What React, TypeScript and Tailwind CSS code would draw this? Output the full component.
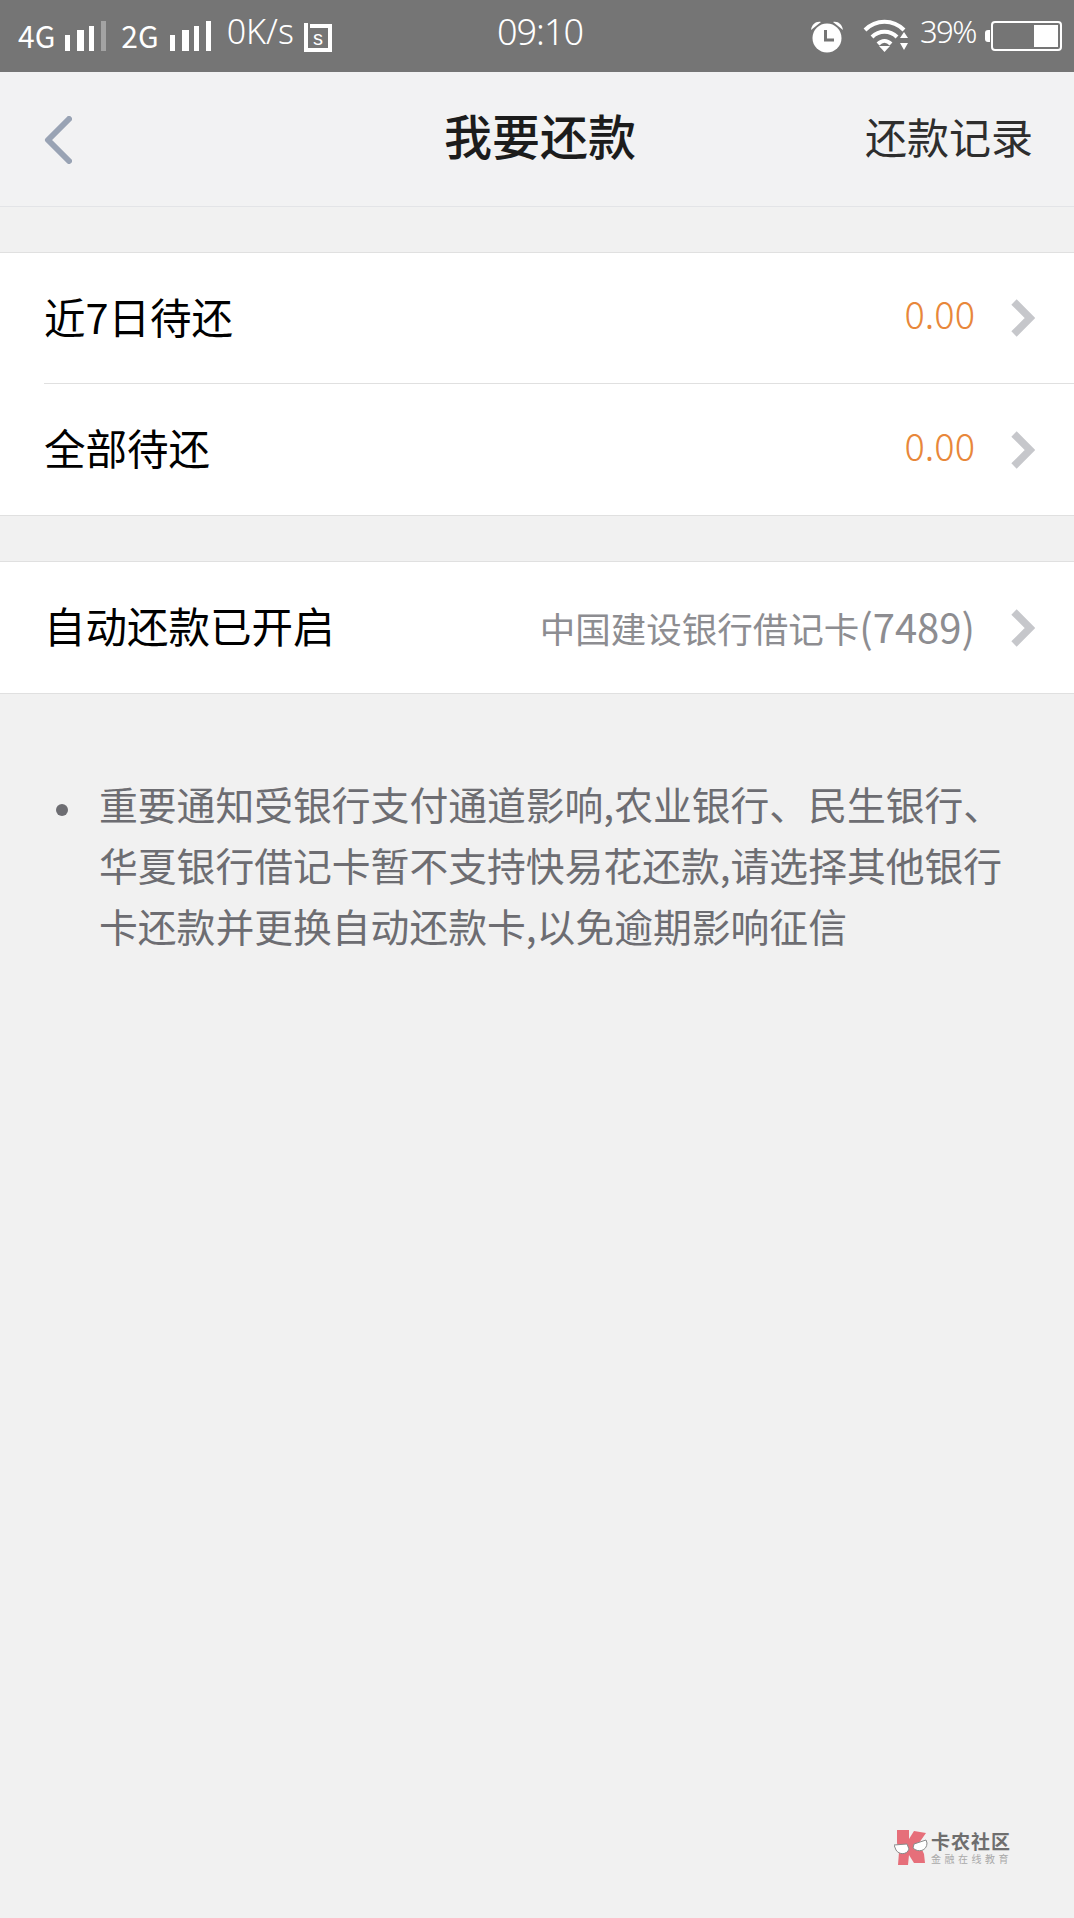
import type { ReactNode } from "react";

const cjk = { fontFamily: '"Noto Sans CJK SC", "Noto Sans", sans-serif' };
const thin = { fontFamily: '"Noto Sans", sans-serif' };

function Chevron() {
  return (
    <svg width="24" height="38" viewBox="0 0 24 38" className="shrink-0">
      <path d="M3 3 L19 19 L3 35" fill="none" stroke="#c6c7cb" strokeWidth="7.5" />
    </svg>
  );
}

function Signal({ dim }: { dim?: boolean }) {
  return (
    <svg width="41" height="30" viewBox="0 0 41 30" className="shrink-0">
      <rect x="0" y="14" width="5" height="16" fill="#fff" />
      <rect x="12" y="9" width="7" height="21" fill="#fff" />
      <rect x="24" y="5" width="5" height="25" fill="#fff" />
      <rect x="36" y="0" width="5" height="30" fill={dim ? "#a3a3a3" : "#fff"} />
    </svg>
  );
}

function Row({
  label,
  children,
  rowClass,
}: {
  label: string;
  children: ReactNode;
  rowClass: string;
}) {
  return (
    <div className={`flex items-center justify-between pl-[44px] pr-[39px] ${rowClass}`}>
      <span className="pb-[3px] text-[41.5px] leading-none text-black">{label}</span>
      <div className="flex items-center gap-[36px]">
        {children}
        <Chevron />
      </div>
    </div>
  );
}

function Amount() {
  return <span className="pb-[10px] text-[38px] font-light leading-none text-[#e8873a]">0.00</span>;
}

export default function App() {
  return (
    <div className="flex min-h-[1918px] w-[1074px] flex-col bg-[#f1f1f1]" style={cjk}>
      {/* status bar */}
      <div className="relative flex h-[72px] items-center justify-between bg-[#757575] pl-[18px] pr-[12px] text-white">
        <div className="flex items-center">
          <span className="pb-[3px] text-[30px] leading-none">4G</span>
          <span className="ml-[10px]"><Signal dim /></span>
          <span className="ml-[15px] pb-[3px] text-[30px] leading-none">2G</span>
          <span className="ml-[11px]"><Signal /></span>
          <span className="ml-[16px] pb-[10px] text-[34px] font-light leading-none" style={thin}>0K/s</span>
          <svg width="28" height="31" viewBox="0 0 28 31" className="ml-[10px]">
            <path d="M2 2 V29 H26 V5 H6" fill="none" stroke="#fff" strokeWidth="4" />
            <text x="14" y="24" textAnchor="middle" fontSize="20" fill="#fff" fontFamily="Liberation Sans">s</text>
          </svg>
        </div>
        <span
          className="absolute left-[497px] top-[10px] text-[36px] font-light leading-[44px] tracking-[-1px]"
          style={thin}
        >
          09:10
        </span>
        <div className="flex items-center">
          <svg width="34" height="33" viewBox="0 0 34 33">
            <circle cx="17" cy="18" r="14.5" fill="#fff" />
            <path d="M1 10 C2 4 6 1 11 2 Z M33 10 C32 4 28 1 23 2 Z" fill="#fff" />
            <path d="M15.5 10 V20 H24" fill="none" stroke="#757575" strokeWidth="3" />
          </svg>
          <svg width="46" height="34" viewBox="0 0 46 34" className="ml-[19px]">
            <path d="M2 11 C13 0 30 0 41 11" fill="none" stroke="#fff" strokeWidth="4" />
            <path d="M9 18 C16 11 27 11 34 18" fill="none" stroke="#fff" strokeWidth="4" />
            <path d="M15 25 C19 21 24 21 28 25" fill="none" stroke="#fff" strokeWidth="4" />
            <path d="M16 27 H27 L21.5 33 Z" fill="#fff" />
            <path d="M41 13 L45 19 H37 Z M37 24 H45 L41 31 Z" fill="#fff" />
          </svg>
          <span className="ml-[11px] pb-[10px] text-[31px] font-light leading-none tracking-[-1.5px]" style={thin}>
            39%
          </span>
          <div className="ml-[9px] h-[12px] w-[5px] rounded-l-[3px] bg-white" />
          <div className="ml-[1px] flex h-[30px] w-[71px] justify-end rounded-[4px] border-2 border-white p-[2px]">
            <div className="h-full w-[24px] bg-white" />
          </div>
        </div>
      </div>

      {/* nav bar */}
      <div className="relative flex h-[135px] items-center justify-between border-b border-[#e3e4e7] bg-[#f2f2f3] pl-[44px] pr-[41px]">
        <svg width="28" height="48" viewBox="0 0 28 48" className="mt-[2px]">
          <path d="M25 3 L4 24 L25 45" fill="none" stroke="#99a3b4" strokeWidth="6" strokeLinecap="round" strokeLinejoin="round" />
        </svg>
        <span className="absolute left-[444px] top-[34px] text-[48px] font-medium leading-[56px] text-[#1c1c1c]">我要还款</span>
        <span className="pb-[6px] text-[42px] leading-none text-[#2e2e2e]">还款记录</span>
      </div>

      {/* amounts */}
      <div className="mt-[45px] border-y border-[#e0e0e0] bg-white">
        <Row label="近7日待还" rowClass="h-[130px]">
          <Amount />
        </Row>
        <div className="ml-[44px] h-px bg-[#e0e0e0]" />
        <Row label="全部待还" rowClass="h-[131px]">
          <Amount />
        </Row>
      </div>

      {/* auto repay */}
      <div className="mt-[45px] border-y border-[#e0e0e0] bg-white">
        <Row label="自动还款已开启" rowClass="h-[131px]">
          <span className="pb-[3px] text-[35.5px] leading-none text-[#8d8d91]">
            中国建设银行借记卡<span className="text-[40px]">(7489)</span>
          </span>
        </Row>
      </div>

      {/* notice */}
      <div className="mt-[79px] flex pl-[56px] pr-[40px]">
        <div className="mt-[31px] h-[12px] w-[12px] shrink-0 rounded-full bg-[#6d6d72]" />
        <p className="ml-[31px] whitespace-nowrap text-[38.8px] leading-[61px] text-[#6d6d72]">
          重要通知受银行支付通道影响,农业银行、民生银行、
          <br />
          华夏银行借记卡暂不支持快易花还款,请选择其他银行
          <br />
          卡还款并更换自动还款卡,以免逾期影响征信
        </p>
      </div>

      {/* watermark */}
      <div className="mt-auto mb-[53px] mr-[62px] flex items-center self-end">
        <svg width="34" height="35" viewBox="0 0 34 35">
          <path d="M3 0 H15 V9 L20 1 L32 3 L25 13 L30 24 L31 33 L20 33 L15 25 L14 35 H4 L5 22 L3 13 Z" fill="#e66f7a" />
          <path d="M0 15 L13 14 L15 19 C13 25 5 25 2 20 Z M32 10 L33 13 C33 21 24 23 19 18 L20 14 Z" fill="#fff" stroke="#8a8a8a" strokeWidth="1" />
        </svg>
        <div className="ml-[3px] flex flex-col">
          <span className="text-[19px] font-bold leading-[20px] tracking-[1px] text-[#6e6e6e]">卡农社区</span>
          <span className="mt-[2px] text-[10px] leading-[12px] tracking-[3.5px] text-[#a9a9a9]">金融在线教育</span>
        </div>
      </div>
    </div>
  );
}
